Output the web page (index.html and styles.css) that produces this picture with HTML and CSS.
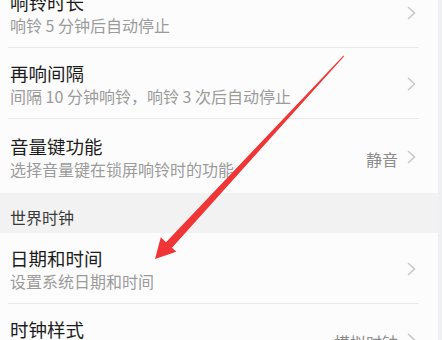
FILE: index.html
```html
<!DOCTYPE html>
<html lang="zh-CN">
<head>
  <meta charset="UTF-8">
  <meta name="viewport" content="width=device-width, initial-scale=1.0">
  <title>闹钟设置</title>
  <link rel="stylesheet" href="styles.css">
</head>
<body>
  <div class="screen">
    <div class="list first">
      <div class="row">
        <div class="text">
          <div class="title">响铃时长</div>
          <div class="sub">响铃 5 分钟后自动停止</div>
        </div>
        <div class="right"><span class="chev"></span></div>
      </div>
      <div class="row">
        <div class="text">
          <div class="title">再响间隔</div>
          <div class="sub">间隔 10 分钟响铃，响铃 3 次后自动停止</div>
        </div>
        <div class="right"><span class="chev"></span></div>
      </div>
      <div class="row last">
        <div class="text">
          <div class="title">音量键功能</div>
          <div class="sub">选择音量键在锁屏响铃时的功能</div>
        </div>
        <div class="right"><span class="value">静音</span><span class="chev"></span></div>
      </div>
    </div>

    <div class="section">世界时钟</div>

    <div class="list">
      <div class="row">
        <div class="text">
          <div class="title">日期和时间</div>
          <div class="sub">设置系统日期和时间</div>
        </div>
        <div class="right"><span class="chev"></span></div>
      </div>
      <div class="row">
        <div class="text">
          <div class="title">时钟样式</div>
          <div class="sub">&nbsp;</div>
        </div>
        <div class="right"><span class="value">模拟时钟</span><span class="chev"></span></div>
      </div>
    </div>

    <!-- red annotation arrow drawn on top of the screenshot -->
    <svg class="arrow" width="442" height="340" viewBox="0 0 442 340">
      <polygon fill="#ef3535" points="343.5,55.5 344,56.5 172,247.8 176.3,251.8 155,259 160.8,237.3 166,242.2"/>
    </svg>
  </div>
</body>
</html>
```

FILE: styles.css
```css
html, body {
  margin: 0;
  padding: 0;
}
body {
  font-family: "Noto Sans CJK SC", "Noto Sans", sans-serif;
  background: #eff0f4;
  overflow: hidden;
}
.screen {
  position: relative;
  width: 438px;
  height: 340px;
  background: #fcfcfc;
  overflow: hidden;
}
.list.first {
  margin-top: -23px;
}
.row {
  display: flex;
  align-items: center;
  margin: 0 19px 0 8px;
  padding: 13px 0 11px 2px;
  border-bottom: 1px solid #e9e9e9;
}
.row.last {
  border-bottom: none;
  padding-top: 15px;
  padding-bottom: 13px;
}
.text {
  flex: 1;
}
.title {
  font-size: 18.5px;
  line-height: 24px;
  color: #1c1c1c;
}
.sub {
  font-size: 16px;
  line-height: 22px;
  color: #9b9b9b;
}
.right {
  display: flex;
  align-items: center;
  gap: 9px;
  padding-right: 3px;
}
.value {
  font-size: 16px;
  line-height: 22px;
  margin-top: 3px;
  color: #8c8c8c;
}
.chev {
  display: block;
  width: 9px;
  height: 14px;
  background: no-repeat center/9px 14px url("data:image/svg+xml,%3Csvg xmlns='http://www.w3.org/2000/svg' width='9' height='14' viewBox='0 0 9 14'%3E%3Cpath d='M1 1l6.5 6L1 13' fill='none' stroke='%23c8c8c8' stroke-width='1.5'/%3E%3C/svg%3E");
}
.section {
  background: #f2f2f2;
  padding: 13px 10px 5px;
  font-size: 16px;
  line-height: 22px;
  color: #3a3a3a;
}
.arrow {
  position: absolute;
  top: 0;
  left: 0;
  pointer-events: none;
}
```
